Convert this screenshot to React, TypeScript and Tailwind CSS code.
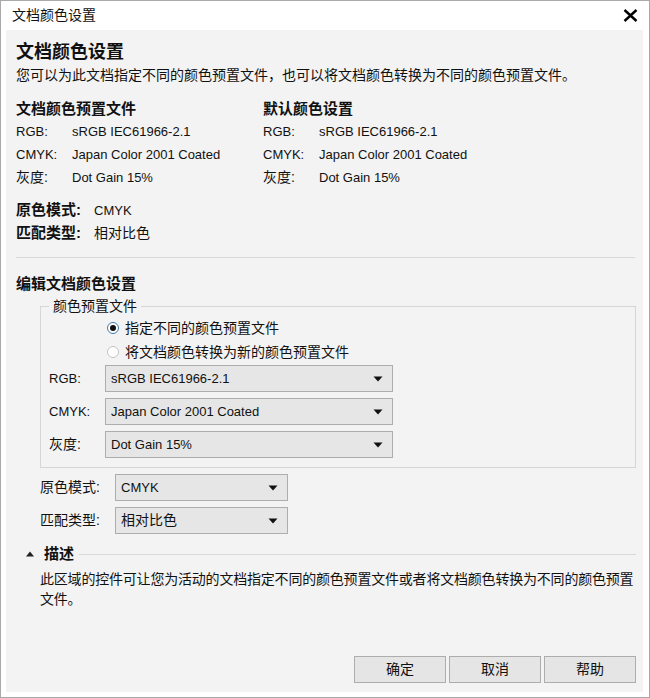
import React from "react";

const font = "font-['Liberation_Sans','Noto_Sans_CJK_SC',sans-serif]";

function Arrow() {
  return (
    <svg width="10" height="6" viewBox="0 0 10 6" className="shrink-0">
      <path d="M0.5 0.5 L9.5 0.5 L5 5.5 Z" fill="#111" />
    </svg>
  );
}

function Select(props: { value: string; width: string; cjk?: boolean }) {
  return (
    <div
      className={`${props.width} h-[27px] flex items-center justify-between pl-[5px] pr-[9px] bg-[#e6e6e6] border border-[#adadad] ${
        props.cjk ? "text-[14px]" : "text-[13px]"
      }`}
    >
      <span>{props.value}</span>
      <Arrow />
    </div>
  );
}

function Radio(props: { checked?: boolean; label: string }) {
  return (
    <div className="h-[24px] flex items-center gap-[6px] pl-[66px]">
      <span
        className={`w-[12px] h-[12px] rounded-full border flex items-center justify-center bg-white ${
          props.checked ? "border-[#3d7bad]" : "border-[#c4c4c4]"
        }`}
      >
        {props.checked && <span className="w-[6px] h-[6px] rounded-full bg-[#111]" />}
      </span>
      <span className="text-[14px]">{props.label}</span>
    </div>
  );
}

const profileRows = [
  { label: "RGB:", value: "sRGB IEC61966-2.1" },
  { label: "CMYK:", value: "Japan Color 2001 Coated" },
  { label: "灰度:", value: "Dot Gain 15%" },
];

function ProfileColumn(props: { title: string; width: string }) {
  return (
    <div className={props.width}>
      <div className="h-[20px] mt-[14px] flex items-center text-[15px] font-bold">{props.title}</div>
      <div className="mt-[1px]">
        {profileRows.map((row) => (
          <div key={row.label} className="h-[23px] flex items-center">
            <span className={`w-[56px] ${row.label === "灰度:" ? "text-[14px]" : "text-[13px]"}`}>{row.label}</span>
            <span className="text-[13px]">{row.value}</span>
          </div>
        ))}
      </div>
    </div>
  );
}

export default function App() {
  return (
    <div className={`w-[650px] h-[698px] bg-white border border-[#a9a9a9] flex flex-col text-[#111] ${font}`}>
      {/* Title bar */}
      <div className="h-[29px] flex items-center justify-between pl-[11px] pr-[11px] shrink-0">
        <span className="text-[14px]">文档颜色设置</span>
        <svg width="15" height="13" viewBox="0 0 15 13">
          <path d="M1.5 1 L13.5 12 M13.5 1 L1.5 12" stroke="#000" strokeWidth="2.4" />
        </svg>
      </div>

      {/* Body */}
      <div className="flex-1 ml-[5px] mr-[6px] mb-[5px] bg-[#f3f3f3] flex flex-col pl-[10px] pr-[7px] pt-[10px] pb-[9px]">
        <div className="h-[24px] flex items-center text-[18px] font-bold">文档颜色设置</div>
        <div className="h-[20px] mt-[1px] flex items-center text-[14px]">
          您可以为此文档指定不同的颜色预置文件，也可以将文档颜色转换为不同的颜色预置文件。
        </div>

        <div className="flex">
          <ProfileColumn title="文档颜色预置文件" width="w-[247px]" />
          <ProfileColumn title="默认颜色设置" width="flex-1" />
        </div>

        <div className="mt-[10px]">
          <div className="h-[23px] flex items-center">
            <span className="w-[78px] text-[15px] font-bold">原色模式:</span>
            <span className="text-[13px]">CMYK</span>
          </div>
          <div className="h-[23px] flex items-center">
            <span className="w-[78px] text-[15px] font-bold">匹配类型:</span>
            <span className="text-[14px]">相对比色</span>
          </div>
        </div>

        <div className="h-px bg-[#d9d9d9] mt-[12px] mr-[1px]" />

        <div className="h-[20px] mt-[16px] flex items-center text-[15px] font-bold">编辑文档颜色设置</div>

        <fieldset className="mt-[2px] ml-[24px] border border-[#d6d6d6] pb-[9px]">
          <legend className="ml-[8px] px-[4px] h-[20px] leading-[20px] text-[14px]">颜色预置文件</legend>
          <Radio checked label="指定不同的颜色预置文件" />
          <Radio label="将文档颜色转换为新的颜色预置文件" />
          <div className="mt-[1px] flex flex-col gap-[6px] pl-[8px]">
            <div className="flex items-center">
              <span className="w-[56px] text-[13px]">RGB:</span>
              <Select value="sRGB IEC61966-2.1" width="w-[288px]" />
            </div>
            <div className="flex items-center">
              <span className="w-[56px] text-[13px]">CMYK:</span>
              <Select value="Japan Color 2001 Coated" width="w-[288px]" />
            </div>
            <div className="flex items-center">
              <span className="w-[56px] text-[14px]">灰度:</span>
              <Select value="Dot Gain 15%" width="w-[288px]" />
            </div>
          </div>
        </fieldset>

        <div className="mt-[6px] ml-[24px] flex flex-col gap-[6px]">
          <div className="flex items-center">
            <span className="w-[75px] text-[14px]">原色模式:</span>
            <Select value="CMYK" width="w-[173px]" />
          </div>
          <div className="flex items-center">
            <span className="w-[75px] text-[14px]">匹配类型:</span>
            <Select value="相对比色" width="w-[173px]" cjk />
          </div>
        </div>

        <div className="h-[20px] mt-[10px] flex items-center">
          <svg width="8" height="6" viewBox="0 0 8 6" className="ml-[10px]">
            <path d="M0 5.5 L8 5.5 L4 0.5 Z" fill="#222" />
          </svg>
          <span className="ml-[10px] text-[15px] font-bold">描述</span>
          <div className="flex-1 h-px bg-[#d9d9d9] ml-[5px]" />
        </div>

        <p className="mt-[5px] ml-[24px] w-[600px] text-[14px] leading-[20px] tracking-[-0.2px]">
          此区域的控件可让您为活动的文档指定不同的颜色预置文件或者将文档颜色转换为不同的颜色预置文件。
        </p>

        <div className="mt-auto flex justify-end gap-[3px]">
          {["确定", "取消", "帮助"].map((b) => (
            <button
              key={b}
              className="w-[92px] h-[27px] bg-[#e5e5e5] border border-[#adadad] text-[14px] flex items-center justify-center"
            >
              {b}
            </button>
          ))}
        </div>
      </div>
    </div>
  );
}
